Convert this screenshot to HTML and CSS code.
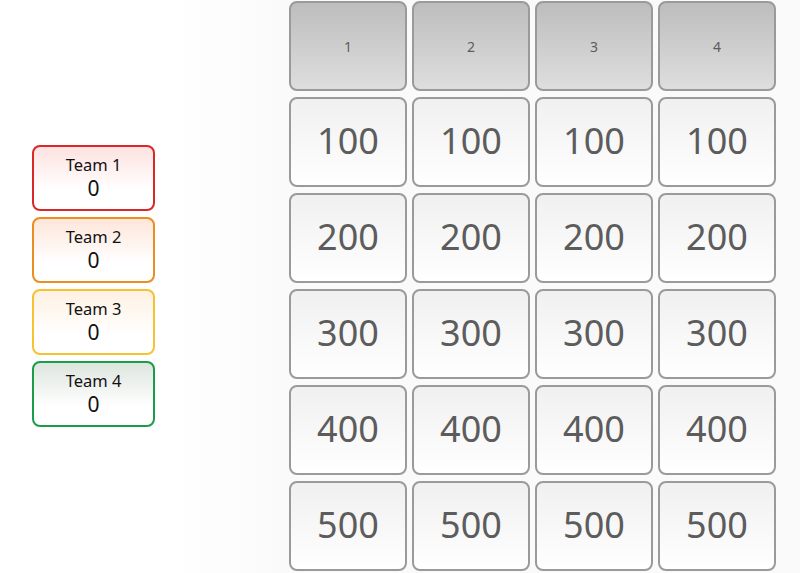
FILE: index.html
```html
<!DOCTYPE html>
<html>
<head>
<meta charset="utf-8">
<link rel="stylesheet" href="styles.css">
</head>
<body>
<div class="page">
  <aside class="teams">
    <div class="team t1"><div class="name">Team 1</div><div class="score">0</div></div>
    <div class="team t2"><div class="name">Team 2</div><div class="score">0</div></div>
    <div class="team t3"><div class="name">Team 3</div><div class="score">0</div></div>
    <div class="team t4"><div class="name">Team 4</div><div class="score">0</div></div>
  </aside>
  <main class="board">
    <div class="head">1</div><div class="head">2</div><div class="head">3</div><div class="head">4</div>
    <div class="cell">100</div><div class="cell">100</div><div class="cell">100</div><div class="cell">100</div>
    <div class="cell">200</div><div class="cell">200</div><div class="cell">200</div><div class="cell">200</div>
    <div class="cell">300</div><div class="cell">300</div><div class="cell">300</div><div class="cell">300</div>
    <div class="cell">400</div><div class="cell">400</div><div class="cell">400</div><div class="cell">400</div>
    <div class="cell">500</div><div class="cell">500</div><div class="cell">500</div><div class="cell">500</div>
  </main>
</div>
</body>
</html>
```

FILE: styles.css
```css
html, body {
  margin: 0;
  padding: 0;
  background: #ffffff;
  font-family: "Noto Sans", "Open Sans", sans-serif;
}
.page {
  display: flex;
  width: 800px;
  height: 573px;
  background: linear-gradient(to right, #ffffff 0px, #ffffff 170px, #fafafa 289px);
}
.teams {
  width: 257px;
  padding-left: 32px;
  padding-top: 145px;
  display: flex;
  flex-direction: column;
  gap: 6px;
}
.team {
  box-sizing: border-box;
  width: 123px;
  height: 66px;
  border: 2px solid #999;
  border-radius: 8px;
  display: flex;
  flex-direction: column;
  align-items: center;
  justify-content: center;
  gap: 1px;
  padding-bottom: 3px;
  color: #111;
}
.team .name {
  font-size: 16.5px;
  line-height: 21px;
}
.team .score {
  font-size: 21px;
  line-height: 24px;
}
.t1 { border-color: #d8282a; background: linear-gradient(#fde2e0, #ffffff 70%); }
.t2 { border-color: #ea8d22; background: linear-gradient(#fde6da, #ffffff 70%); }
.t3 { border-color: #f6c231; background: linear-gradient(#fdf1e2, #ffffff 70%); }
.t4 { border-color: #1a9c48; background: linear-gradient(#dde5de, #ffffff 70%); }
.board {
  padding-top: 1px;
  display: grid;
  grid-template-columns: repeat(4, 118px);
  grid-template-rows: repeat(6, 90px);
  column-gap: 5px;
  row-gap: 6px;
}
.head, .cell {
  box-sizing: border-box;
  border: 2px solid #9a9a9a;
  border-radius: 8px;
  display: flex;
  align-items: center;
  justify-content: center;
  color: #5c5c5c;
}
.head {
  background: linear-gradient(#bdbdbd, #dedede);
  font-size: 14px;
}
.cell {
  background: linear-gradient(#f0f0f0, #ffffff);
  font-size: 36px;
  padding-bottom: 4px;
}
```
